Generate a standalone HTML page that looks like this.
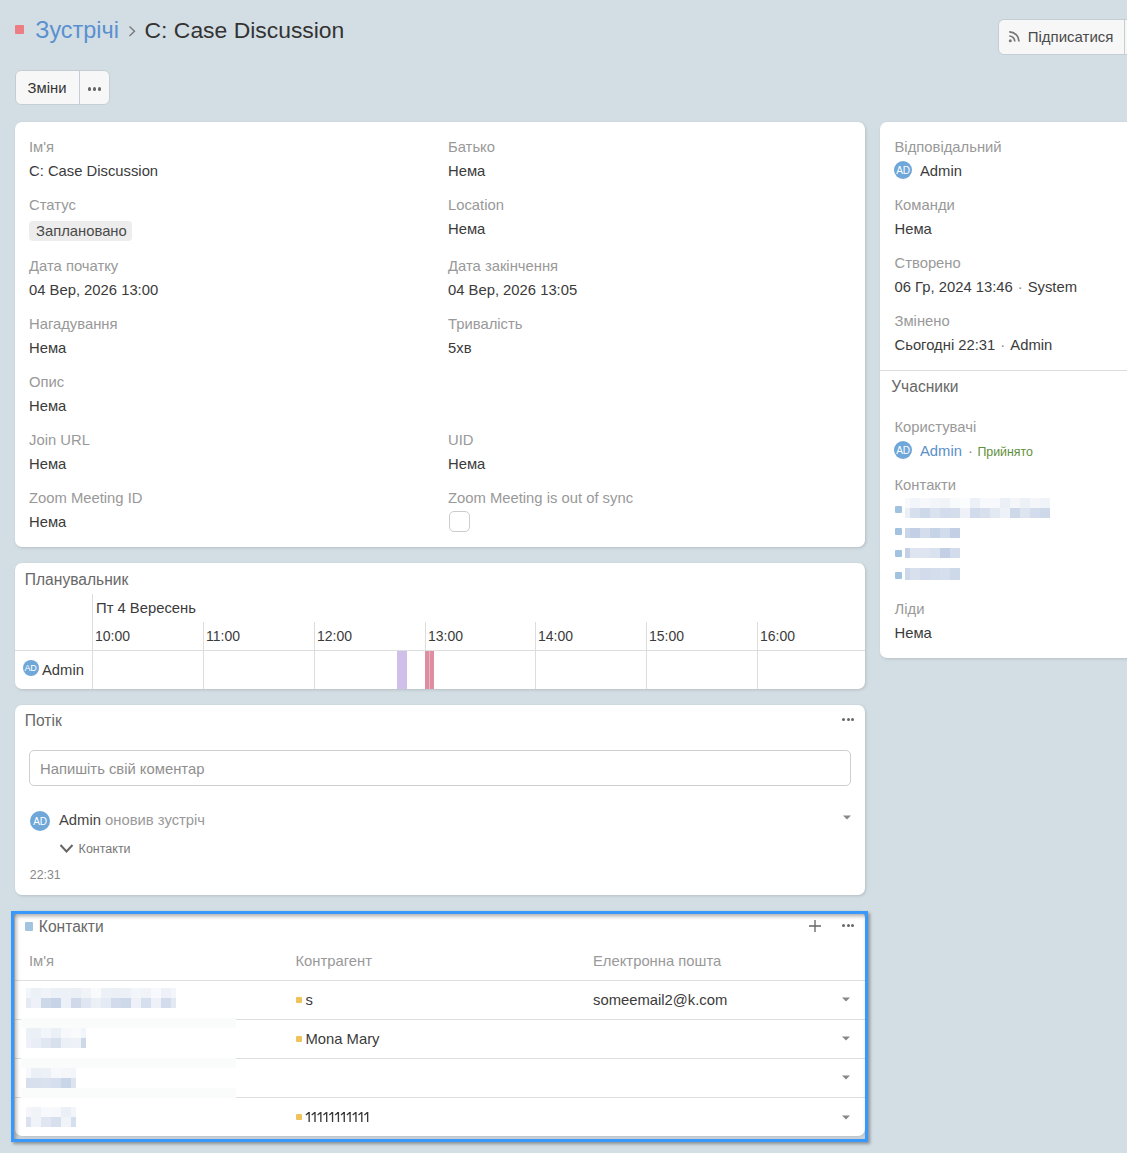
<!DOCTYPE html>
<html><head><meta charset="utf-8"><style>
html,body{margin:0;padding:0;}
body{width:1127px;height:1153px;background:#d3dee4;position:relative;overflow:hidden;font-family:"Liberation Sans",sans-serif;}
.t{position:absolute;white-space:nowrap;line-height:1;}
</style></head><body>
<div style="position:absolute;left:15px;top:25px;width:9px;height:9px;background:#ec7e83;border-radius:1px"></div>
<div class="t" style="left:35.3px;top:18.69px;font-size:23.4px;color:#5a90d0;font-weight:400;">Зустрічі</div>
<svg style="position:absolute;left:127px;top:24px" width="10" height="14" viewBox="0 0 10 14"><path d="M2.5 2.5 L7.5 7.2 L2.5 12" fill="none" stroke="#7a7a7a" stroke-width="1.4"/></svg>
<div class="t" style="left:144.6px;top:19.12px;font-size:22.9px;color:#333;font-weight:400;">C: Case Discussion</div>
<div style="position:absolute;left:998px;top:19px;width:140px;height:36px;background:#f7f7f7;border:1px solid #c5ced4;border-radius:6px;box-sizing:border-box"></div>
<div style="position:absolute;left:1124px;top:19px;width:1px;height:36px;background:#c5ced4"></div>
<svg style="position:absolute;left:1008px;top:30px" width="13" height="13" viewBox="0 0 13 13"><circle cx="2.3" cy="10.7" r="1.5" fill="#777"/><path d="M1.2 6 A5.5 5.5 0 0 1 6.8 11.6" fill="none" stroke="#777" stroke-width="1.7"/><path d="M1.2 1.8 A9.7 9.7 0 0 1 11 11.6" fill="none" stroke="#777" stroke-width="1.7"/></svg>
<div class="t" style="left:1027.7px;top:28.80px;font-size:15px;color:#4a4a4a;font-weight:400;">Підписатися</div>
<div style="position:absolute;left:15px;top:70px;width:95px;height:35px;background:#f7f7f7;border:1px solid #c5ced4;border-radius:6px;box-sizing:border-box"></div>
<div style="position:absolute;left:79px;top:70px;width:1px;height:35px;background:#c5ced4"></div>
<div class="t" style="left:27.6px;top:81.47px;font-size:14.8px;color:#333;font-weight:400;">Зміни</div>
<div style="position:absolute;left:87.75px;top:87px;width:3.5px;height:3.5px;background:#666;border-radius:50%"></div>
<div style="position:absolute;left:92.75px;top:87px;width:3.5px;height:3.5px;background:#666;border-radius:50%"></div>
<div style="position:absolute;left:97.75px;top:87px;width:3.5px;height:3.5px;background:#666;border-radius:50%"></div>
<div style="position:absolute;left:15px;top:122px;width:850px;height:425px;background:#fff;border-radius:7px;box-shadow:1px 1px 3px rgba(0,0,0,0.15)"></div>
<div style="position:absolute;left:880px;top:122px;width:260px;height:536px;background:#fff;border-radius:7px;box-shadow:1px 1px 3px rgba(0,0,0,0.15)"></div>
<div style="position:absolute;left:15px;top:563px;width:850px;height:126px;background:#fff;border-radius:7px;box-shadow:1px 1px 3px rgba(0,0,0,0.15)"></div>
<div style="position:absolute;left:15px;top:705px;width:850px;height:190px;background:#fff;border-radius:7px;box-shadow:1px 1px 3px rgba(0,0,0,0.15)"></div>
<div class="t" style="left:29px;top:140.47px;font-size:14.8px;color:#999;font-weight:400;">Ім'я</div>
<div class="t" style="left:29px;top:164.47px;font-size:14.8px;color:#3b3b3b;font-weight:400;">C: Case Discussion</div>
<div class="t" style="left:448px;top:140.47px;font-size:14.8px;color:#999;font-weight:400;">Батько</div>
<div class="t" style="left:448px;top:164.47px;font-size:14.8px;color:#3b3b3b;font-weight:400;">Нема</div>
<div class="t" style="left:29px;top:198.47px;font-size:14.8px;color:#999;font-weight:400;">Статус</div>
<div class="t" style="left:448px;top:198.47px;font-size:14.8px;color:#999;font-weight:400;">Location</div>
<div class="t" style="left:448px;top:222.47px;font-size:14.8px;color:#3b3b3b;font-weight:400;">Нема</div>
<div class="t" style="left:29px;top:259.47px;font-size:14.8px;color:#999;font-weight:400;">Дата початку</div>
<div class="t" style="left:29px;top:283.47px;font-size:14.8px;color:#3b3b3b;font-weight:400;">04 Вер, 2026 13:00</div>
<div class="t" style="left:448px;top:259.47px;font-size:14.8px;color:#999;font-weight:400;">Дата закінчення</div>
<div class="t" style="left:448px;top:283.47px;font-size:14.8px;color:#3b3b3b;font-weight:400;">04 Вер, 2026 13:05</div>
<div class="t" style="left:29px;top:317.47px;font-size:14.8px;color:#999;font-weight:400;">Нагадування</div>
<div class="t" style="left:29px;top:341.47px;font-size:14.8px;color:#3b3b3b;font-weight:400;">Нема</div>
<div class="t" style="left:448px;top:317.47px;font-size:14.8px;color:#999;font-weight:400;">Тривалість</div>
<div class="t" style="left:448px;top:341.47px;font-size:14.8px;color:#3b3b3b;font-weight:400;">5хв</div>
<div class="t" style="left:29px;top:375.47px;font-size:14.8px;color:#999;font-weight:400;">Опис</div>
<div class="t" style="left:29px;top:399.47px;font-size:14.8px;color:#3b3b3b;font-weight:400;">Нема</div>
<div class="t" style="left:29px;top:433.47px;font-size:14.8px;color:#999;font-weight:400;">Join URL</div>
<div class="t" style="left:29px;top:457.47px;font-size:14.8px;color:#3b3b3b;font-weight:400;">Нема</div>
<div class="t" style="left:448px;top:433.47px;font-size:14.8px;color:#999;font-weight:400;">UID</div>
<div class="t" style="left:448px;top:457.47px;font-size:14.8px;color:#3b3b3b;font-weight:400;">Нема</div>
<div class="t" style="left:29px;top:491.47px;font-size:14.8px;color:#999;font-weight:400;">Zoom Meeting ID</div>
<div class="t" style="left:29px;top:515.47px;font-size:14.8px;color:#3b3b3b;font-weight:400;">Нема</div>
<div class="t" style="left:448px;top:491.47px;font-size:14.8px;color:#999;font-weight:400;">Zoom Meeting is out of sync</div>
<div style="position:absolute;left:29px;top:221px;width:103px;height:20px;background:#ededed;border-radius:4px"></div>
<div class="t" style="left:36px;top:224.27px;font-size:14.8px;color:#4a4a4a;font-weight:400;">Заплановано</div>
<div style="position:absolute;left:449px;top:511px;width:21px;height:21px;border:1px solid #ccc;border-radius:5px;box-sizing:border-box;background:#fff"></div>
<div class="t" style="left:894.5px;top:140.47px;font-size:14.8px;color:#999;font-weight:400;">Відповідальний</div>
<div style="position:absolute;left:894px;top:161px;width:18px;height:18px;background:#6fa7d9;border-radius:50%"></div>
<div class="t" style="left:894px;top:161.5px;width:18px;height:18px;line-height:18px;text-align:center;font-size:10px;color:#fff;letter-spacing:-0.3px">AD</div>
<div class="t" style="left:920px;top:164.47px;font-size:14.8px;color:#3b3b3b;font-weight:400;">Admin</div>
<div class="t" style="left:894.5px;top:198.47px;font-size:14.8px;color:#999;font-weight:400;">Команди</div>
<div class="t" style="left:894.5px;top:222.47px;font-size:14.8px;color:#3b3b3b;font-weight:400;">Нема</div>
<div class="t" style="left:894.5px;top:256.47px;font-size:14.8px;color:#999;font-weight:400;">Створено</div>
<div class="t" style="left:894.5px;top:280.47px;font-size:14.8px;color:#3b3b3b;font-weight:400;">06 Гр, 2024 13:46<span style="color:#888;padding:0 5px">·</span>System</div>
<div class="t" style="left:894.5px;top:314.47px;font-size:14.8px;color:#999;font-weight:400;">Змінено</div>
<div class="t" style="left:894.5px;top:338.47px;font-size:14.8px;color:#3b3b3b;font-weight:400;">Сьогодні 22:31<span style="color:#888;padding:0 5px">·</span>Admin</div>
<div style="position:absolute;left:880px;top:370px;width:260px;height:1px;background:#dcdcdc"></div>
<div class="t" style="left:891.2px;top:378.59px;font-size:15.6px;color:#686868;font-weight:400;">Учасники</div>
<div class="t" style="left:894.5px;top:419.97px;font-size:14.8px;color:#999;font-weight:400;">Користувачі</div>
<div style="position:absolute;left:894px;top:441px;width:18px;height:18px;background:#6fa7d9;border-radius:50%"></div>
<div class="t" style="left:894px;top:441.5px;width:18px;height:18px;line-height:18px;text-align:center;font-size:10px;color:#fff;letter-spacing:-0.3px">AD</div>
<div class="t" style="left:920px;top:443.97px;font-size:14.8px;color:#5a8fc8;font-weight:400;">Admin</div>
<div class="t" style="left:968px;top:443.97px;font-size:14.8px;color:#888;font-weight:400;">·</div>
<div class="t" style="left:977.4px;top:446.00px;font-size:12.4px;color:#5f8f3e;font-weight:400;">Прийнято</div>
<div class="t" style="left:894.5px;top:478.27px;font-size:14.8px;color:#999;font-weight:400;">Контакти</div>
<div style="position:absolute;left:895.3px;top:506px;width:6.5px;height:6.5px;background:#a2c3e0;border-radius:1px"></div>
<div style="position:absolute;left:905px;top:498.0px;width:5px;height:10.0px;background:rgba(70,110,175,0.04)"></div>
<div style="position:absolute;left:910px;top:498.0px;width:10px;height:10.0px;background:rgba(70,110,175,0.07)"></div>
<div style="position:absolute;left:920px;top:498.0px;width:10px;height:10.0px;background:rgba(70,110,175,0.05)"></div>
<div style="position:absolute;left:930px;top:498.0px;width:10px;height:10.0px;background:rgba(70,110,175,0.07)"></div>
<div style="position:absolute;left:940px;top:498.0px;width:10px;height:10.0px;background:rgba(70,110,175,0.08)"></div>
<div style="position:absolute;left:950px;top:498.0px;width:10px;height:10.0px;background:rgba(70,110,175,0.03)"></div>
<div style="position:absolute;left:960px;top:498.0px;width:10px;height:10.0px;background:rgba(70,110,175,0.02)"></div>
<div style="position:absolute;left:970px;top:498.0px;width:10px;height:10.0px;background:rgba(70,110,175,0.10)"></div>
<div style="position:absolute;left:980px;top:498.0px;width:10px;height:10.0px;background:rgba(70,110,175,0.04)"></div>
<div style="position:absolute;left:990px;top:498.0px;width:10px;height:10.0px;background:rgba(70,110,175,0.04)"></div>
<div style="position:absolute;left:1000px;top:498.0px;width:10px;height:10.0px;background:rgba(70,110,175,0.11)"></div>
<div style="position:absolute;left:1010px;top:498.0px;width:10px;height:10.0px;background:rgba(70,110,175,0.06)"></div>
<div style="position:absolute;left:1020px;top:498.0px;width:10px;height:10.0px;background:rgba(70,110,175,0.10)"></div>
<div style="position:absolute;left:1030px;top:498.0px;width:10px;height:10.0px;background:rgba(70,110,175,0.06)"></div>
<div style="position:absolute;left:1040px;top:498.0px;width:10px;height:10.0px;background:rgba(70,110,175,0.08)"></div>
<div style="position:absolute;left:905px;top:508.0px;width:5px;height:10.0px;background:rgba(70,110,175,0.11)"></div>
<div style="position:absolute;left:910px;top:508.0px;width:10px;height:10.0px;background:rgba(70,110,175,0.22)"></div>
<div style="position:absolute;left:920px;top:508.0px;width:10px;height:10.0px;background:rgba(70,110,175,0.27)"></div>
<div style="position:absolute;left:930px;top:508.0px;width:10px;height:10.0px;background:rgba(70,110,175,0.20)"></div>
<div style="position:absolute;left:940px;top:508.0px;width:10px;height:10.0px;background:rgba(70,110,175,0.24)"></div>
<div style="position:absolute;left:950px;top:508.0px;width:10px;height:10.0px;background:rgba(70,110,175,0.23)"></div>
<div style="position:absolute;left:960px;top:508.0px;width:10px;height:10.0px;background:rgba(70,110,175,0.09)"></div>
<div style="position:absolute;left:970px;top:508.0px;width:10px;height:10.0px;background:rgba(70,110,175,0.25)"></div>
<div style="position:absolute;left:980px;top:508.0px;width:10px;height:10.0px;background:rgba(70,110,175,0.21)"></div>
<div style="position:absolute;left:990px;top:508.0px;width:10px;height:10.0px;background:rgba(70,110,175,0.15)"></div>
<div style="position:absolute;left:1000px;top:508.0px;width:10px;height:10.0px;background:rgba(70,110,175,0.09)"></div>
<div style="position:absolute;left:1010px;top:508.0px;width:10px;height:10.0px;background:rgba(70,110,175,0.27)"></div>
<div style="position:absolute;left:1020px;top:508.0px;width:10px;height:10.0px;background:rgba(70,110,175,0.18)"></div>
<div style="position:absolute;left:1030px;top:508.0px;width:10px;height:10.0px;background:rgba(70,110,175,0.24)"></div>
<div style="position:absolute;left:1040px;top:508.0px;width:10px;height:10.0px;background:rgba(70,110,175,0.27)"></div>
<div style="position:absolute;left:895.3px;top:528px;width:6.5px;height:6.5px;background:#a2c3e0;border-radius:1px"></div>
<div style="position:absolute;left:905px;top:528.0px;width:5px;height:10.0px;background:rgba(70,110,175,0.29)"></div>
<div style="position:absolute;left:910px;top:528.0px;width:10px;height:10.0px;background:rgba(70,110,175,0.33)"></div>
<div style="position:absolute;left:920px;top:528.0px;width:10px;height:10.0px;background:rgba(70,110,175,0.23)"></div>
<div style="position:absolute;left:930px;top:528.0px;width:10px;height:10.0px;background:rgba(70,110,175,0.30)"></div>
<div style="position:absolute;left:940px;top:528.0px;width:10px;height:10.0px;background:rgba(70,110,175,0.24)"></div>
<div style="position:absolute;left:950px;top:528.0px;width:10px;height:10.0px;background:rgba(70,110,175,0.33)"></div>
<div style="position:absolute;left:895.3px;top:550px;width:6.5px;height:6.5px;background:#a2c3e0;border-radius:1px"></div>
<div style="position:absolute;left:905px;top:548.0px;width:5px;height:10.0px;background:rgba(70,110,175,0.32)"></div>
<div style="position:absolute;left:910px;top:548.0px;width:10px;height:10.0px;background:rgba(70,110,175,0.18)"></div>
<div style="position:absolute;left:920px;top:548.0px;width:10px;height:10.0px;background:rgba(70,110,175,0.18)"></div>
<div style="position:absolute;left:930px;top:548.0px;width:10px;height:10.0px;background:rgba(70,110,175,0.20)"></div>
<div style="position:absolute;left:940px;top:548.0px;width:10px;height:10.0px;background:rgba(70,110,175,0.33)"></div>
<div style="position:absolute;left:950px;top:548.0px;width:10px;height:10.0px;background:rgba(70,110,175,0.24)"></div>
<div style="position:absolute;left:895.3px;top:572px;width:6.5px;height:6.5px;background:#a2c3e0;border-radius:1px"></div>
<div style="position:absolute;left:905px;top:568.0px;width:5px;height:12.0px;background:rgba(70,110,175,0.27)"></div>
<div style="position:absolute;left:910px;top:568.0px;width:10px;height:12.0px;background:rgba(70,110,175,0.21)"></div>
<div style="position:absolute;left:920px;top:568.0px;width:10px;height:12.0px;background:rgba(70,110,175,0.25)"></div>
<div style="position:absolute;left:930px;top:568.0px;width:10px;height:12.0px;background:rgba(70,110,175,0.23)"></div>
<div style="position:absolute;left:940px;top:568.0px;width:10px;height:12.0px;background:rgba(70,110,175,0.22)"></div>
<div style="position:absolute;left:950px;top:568.0px;width:10px;height:12.0px;background:rgba(70,110,175,0.27)"></div>
<div class="t" style="left:894.5px;top:602.47px;font-size:14.8px;color:#999;font-weight:400;">Ліди</div>
<div class="t" style="left:894.5px;top:626.47px;font-size:14.8px;color:#3b3b3b;font-weight:400;">Нема</div>
<div class="t" style="left:24.8px;top:571.79px;font-size:15.6px;color:#686868;font-weight:400;">Планувальник</div>
<div style="position:absolute;left:92px;top:594px;width:1px;height:95px;background:#ddd"></div>
<div class="t" style="left:96px;top:601.47px;font-size:14.8px;color:#3b3b3b;font-weight:400;">Пт 4 Вересень</div>
<div style="position:absolute;left:15px;top:650px;width:850px;height:1px;background:#ddd"></div>
<div class="t" style="left:95px;top:629.15px;font-size:14px;color:#3b3b3b;font-weight:400;">10:00</div>
<div style="position:absolute;left:203px;top:622px;width:1px;height:67px;background:#ddd"></div>
<div class="t" style="left:206px;top:629.15px;font-size:14px;color:#3b3b3b;font-weight:400;">11:00</div>
<div style="position:absolute;left:314px;top:622px;width:1px;height:67px;background:#ddd"></div>
<div class="t" style="left:317px;top:629.15px;font-size:14px;color:#3b3b3b;font-weight:400;">12:00</div>
<div style="position:absolute;left:425px;top:622px;width:1px;height:67px;background:#ddd"></div>
<div class="t" style="left:428px;top:629.15px;font-size:14px;color:#3b3b3b;font-weight:400;">13:00</div>
<div style="position:absolute;left:535px;top:622px;width:1px;height:67px;background:#ddd"></div>
<div class="t" style="left:538px;top:629.15px;font-size:14px;color:#3b3b3b;font-weight:400;">14:00</div>
<div style="position:absolute;left:646px;top:622px;width:1px;height:67px;background:#ddd"></div>
<div class="t" style="left:649px;top:629.15px;font-size:14px;color:#3b3b3b;font-weight:400;">15:00</div>
<div style="position:absolute;left:757px;top:622px;width:1px;height:67px;background:#ddd"></div>
<div class="t" style="left:760px;top:629.15px;font-size:14px;color:#3b3b3b;font-weight:400;">16:00</div>
<div style="position:absolute;left:22.5px;top:659.5px;width:16px;height:16px;background:#6fa7d9;border-radius:50%"></div>
<div class="t" style="left:22.5px;top:660.0px;width:16px;height:16px;line-height:16px;text-align:center;font-size:9px;color:#fff;letter-spacing:-0.3px">AD</div>
<div class="t" style="left:42px;top:663.47px;font-size:14.8px;color:#3b3b3b;font-weight:400;">Admin</div>
<div style="position:absolute;left:397px;top:651px;width:10px;height:38px;background:#d0bfe8"></div>
<div style="position:absolute;left:425px;top:651px;width:9px;height:38px;background:#df8ea1"></div>
<div style="position:absolute;left:429px;top:651px;width:1px;height:38px;background:#e8b3c3"></div>
<div class="t" style="left:24.8px;top:712.79px;font-size:15.6px;color:#686868;font-weight:400;">Потік</div>
<div style="position:absolute;left:842.0px;top:718px;width:3.1px;height:3.1px;background:#666;border-radius:50%"></div>
<div style="position:absolute;left:846.7px;top:718px;width:3.1px;height:3.1px;background:#666;border-radius:50%"></div>
<div style="position:absolute;left:851.4px;top:718px;width:3.1px;height:3.1px;background:#666;border-radius:50%"></div>
<div style="position:absolute;left:29px;top:750px;width:822px;height:36px;border:1px solid #cfcfcf;border-radius:5px;box-sizing:border-box"></div>
<div class="t" style="left:40px;top:761.67px;font-size:14.8px;color:#8f8f8f;font-weight:400;">Напишіть свій коментар</div>
<div style="position:absolute;left:30px;top:811px;width:20px;height:20px;background:#6fa7d9;border-radius:50%"></div>
<div class="t" style="left:30px;top:811.5px;width:20px;height:20px;line-height:20px;text-align:center;font-size:10px;color:#fff;letter-spacing:-0.3px">AD</div>
<div class="t" style="left:59px;top:813.47px;font-size:14.8px;color:#444;font-weight:400;">Admin <span style="color:#999">оновив зустріч</span></div>
<svg style="position:absolute;left:842px;top:815px" width="10" height="6" viewBox="0 0 10 6"><path d="M1 0.5 L9 0.5 L5 4.5 Z" fill="#888"/></svg>
<svg style="position:absolute;left:59px;top:843px" width="15" height="11" viewBox="0 0 15 11"><path d="M1.5 2 L7.5 8.5 L13.5 2" fill="none" stroke="#666" stroke-width="2"/></svg>
<div class="t" style="left:78.6px;top:843.42px;font-size:12.5px;color:#777;font-weight:400;">Контакти</div>
<div class="t" style="left:29.8px;top:868.59px;font-size:12.3px;color:#888;font-weight:400;">22:31</div>
<div style="position:absolute;left:15px;top:911px;width:850px;height:225px;background:#fff;border-radius:7px;box-shadow:1px 1px 3px rgba(0,0,0,0.15)"></div>
<div style="position:absolute;left:25px;top:922px;width:8px;height:8.7px;background:#a3c4e0;border-radius:1px"></div>
<div class="t" style="left:38.8px;top:919.09px;font-size:15.6px;color:#686868;font-weight:400;">Контакти</div>
<svg style="position:absolute;left:809px;top:920px" width="12" height="12" viewBox="0 0 12 12"><path d="M6 0 V12 M0 6 H12" stroke="#666" stroke-width="1.35"/></svg>
<div style="position:absolute;left:842.0px;top:924px;width:3.1px;height:3.1px;background:#666;border-radius:50%"></div>
<div style="position:absolute;left:846.7px;top:924px;width:3.1px;height:3.1px;background:#666;border-radius:50%"></div>
<div style="position:absolute;left:851.4px;top:924px;width:3.1px;height:3.1px;background:#666;border-radius:50%"></div>
<div class="t" style="left:29px;top:954.07px;font-size:14.8px;color:#999;font-weight:400;">Ім'я</div>
<div class="t" style="left:295.5px;top:954.07px;font-size:14.8px;color:#999;font-weight:400;">Контрагент</div>
<div class="t" style="left:593px;top:954.07px;font-size:14.8px;color:#999;font-weight:400;">Електронна пошта</div>
<div style="position:absolute;left:14px;top:980px;width:851px;height:1px;background:#dedede"></div>
<div style="position:absolute;left:14px;top:1019px;width:851px;height:1px;background:#dedede"></div>
<div style="position:absolute;left:14px;top:1058px;width:851px;height:1px;background:#dedede"></div>
<div style="position:absolute;left:14px;top:1097px;width:851px;height:1px;background:#dedede"></div>
<div style="position:absolute;left:295.5px;top:996.6px;width:6px;height:6px;background:#f0c25a;border-radius:1px"></div>
<div class="t" style="left:305.5px;top:993.07px;font-size:14.8px;color:#3b3b3b;font-weight:400;">s</div>
<div class="t" style="left:593px;top:993.07px;font-size:14.8px;color:#3b3b3b;font-weight:400;">someemail2@k.com</div>
<svg style="position:absolute;left:841px;top:997px" width="10" height="6" viewBox="0 0 10 6"><path d="M1 0.5 L9 0.5 L5 4.5 Z" fill="#888"/></svg>
<div style="position:absolute;left:26px;top:988.0px;width:5px;height:10.0px;background:rgba(70,110,175,0.07)"></div>
<div style="position:absolute;left:31px;top:988.0px;width:10px;height:10.0px;background:rgba(70,110,175,0.10)"></div>
<div style="position:absolute;left:41px;top:988.0px;width:10px;height:10.0px;background:rgba(70,110,175,0.08)"></div>
<div style="position:absolute;left:51px;top:988.0px;width:10px;height:10.0px;background:rgba(70,110,175,0.10)"></div>
<div style="position:absolute;left:61px;top:988.0px;width:10px;height:10.0px;background:rgba(70,110,175,0.10)"></div>
<div style="position:absolute;left:71px;top:988.0px;width:10px;height:10.0px;background:rgba(70,110,175,0.11)"></div>
<div style="position:absolute;left:81px;top:988.0px;width:10px;height:10.0px;background:rgba(70,110,175,0.08)"></div>
<div style="position:absolute;left:91px;top:988.0px;width:10px;height:10.0px;background:rgba(70,110,175,0.03)"></div>
<div style="position:absolute;left:101px;top:988.0px;width:10px;height:10.0px;background:rgba(70,110,175,0.10)"></div>
<div style="position:absolute;left:111px;top:988.0px;width:10px;height:10.0px;background:rgba(70,110,175,0.11)"></div>
<div style="position:absolute;left:121px;top:988.0px;width:10px;height:10.0px;background:rgba(70,110,175,0.10)"></div>
<div style="position:absolute;left:131px;top:988.0px;width:10px;height:10.0px;background:rgba(70,110,175,0.07)"></div>
<div style="position:absolute;left:141px;top:988.0px;width:10px;height:10.0px;background:rgba(70,110,175,0.08)"></div>
<div style="position:absolute;left:151px;top:988.0px;width:10px;height:10.0px;background:rgba(70,110,175,0.04)"></div>
<div style="position:absolute;left:161px;top:988.0px;width:10px;height:10.0px;background:rgba(70,110,175,0.09)"></div>
<div style="position:absolute;left:171px;top:988.0px;width:5px;height:10.0px;background:rgba(70,110,175,0.07)"></div>
<div style="position:absolute;left:26px;top:998.0px;width:5px;height:10.0px;background:rgba(70,110,175,0.14)"></div>
<div style="position:absolute;left:31px;top:998.0px;width:10px;height:10.0px;background:rgba(70,110,175,0.09)"></div>
<div style="position:absolute;left:41px;top:998.0px;width:10px;height:10.0px;background:rgba(70,110,175,0.27)"></div>
<div style="position:absolute;left:51px;top:998.0px;width:10px;height:10.0px;background:rgba(70,110,175,0.30)"></div>
<div style="position:absolute;left:61px;top:998.0px;width:10px;height:10.0px;background:rgba(70,110,175,0.10)"></div>
<div style="position:absolute;left:71px;top:998.0px;width:10px;height:10.0px;background:rgba(70,110,175,0.26)"></div>
<div style="position:absolute;left:81px;top:998.0px;width:10px;height:10.0px;background:rgba(70,110,175,0.17)"></div>
<div style="position:absolute;left:91px;top:998.0px;width:10px;height:10.0px;background:rgba(70,110,175,0.11)"></div>
<div style="position:absolute;left:101px;top:998.0px;width:10px;height:10.0px;background:rgba(70,110,175,0.14)"></div>
<div style="position:absolute;left:111px;top:998.0px;width:10px;height:10.0px;background:rgba(70,110,175,0.25)"></div>
<div style="position:absolute;left:121px;top:998.0px;width:10px;height:10.0px;background:rgba(70,110,175,0.27)"></div>
<div style="position:absolute;left:131px;top:998.0px;width:10px;height:10.0px;background:rgba(70,110,175,0.09)"></div>
<div style="position:absolute;left:141px;top:998.0px;width:10px;height:10.0px;background:rgba(70,110,175,0.22)"></div>
<div style="position:absolute;left:151px;top:998.0px;width:10px;height:10.0px;background:rgba(70,110,175,0.09)"></div>
<div style="position:absolute;left:161px;top:998.0px;width:10px;height:10.0px;background:rgba(70,110,175,0.24)"></div>
<div style="position:absolute;left:171px;top:998.0px;width:5px;height:10.0px;background:rgba(70,110,175,0.15)"></div>
<div style="position:absolute;left:295.5px;top:1035.8px;width:6px;height:6px;background:#f0c25a;border-radius:1px"></div>
<div class="t" style="left:305.5px;top:1032.27px;font-size:14.8px;color:#3b3b3b;font-weight:400;">Mona Mary</div>
<svg style="position:absolute;left:841px;top:1036px" width="10" height="6" viewBox="0 0 10 6"><path d="M1 0.5 L9 0.5 L5 4.5 Z" fill="#888"/></svg>
<div style="position:absolute;left:26px;top:1028.0px;width:5px;height:10.0px;background:rgba(70,110,175,0.10)"></div>
<div style="position:absolute;left:31px;top:1028.0px;width:10px;height:10.0px;background:rgba(70,110,175,0.11)"></div>
<div style="position:absolute;left:41px;top:1028.0px;width:10px;height:10.0px;background:rgba(70,110,175,0.07)"></div>
<div style="position:absolute;left:51px;top:1028.0px;width:10px;height:10.0px;background:rgba(70,110,175,0.11)"></div>
<div style="position:absolute;left:61px;top:1028.0px;width:10px;height:10.0px;background:rgba(70,110,175,0.05)"></div>
<div style="position:absolute;left:71px;top:1028.0px;width:10px;height:10.0px;background:rgba(70,110,175,0.03)"></div>
<div style="position:absolute;left:81px;top:1028.0px;width:5px;height:10.0px;background:rgba(70,110,175,0.07)"></div>
<div style="position:absolute;left:26px;top:1038.0px;width:5px;height:10.0px;background:rgba(70,110,175,0.09)"></div>
<div style="position:absolute;left:31px;top:1038.0px;width:10px;height:10.0px;background:rgba(70,110,175,0.12)"></div>
<div style="position:absolute;left:41px;top:1038.0px;width:10px;height:10.0px;background:rgba(70,110,175,0.17)"></div>
<div style="position:absolute;left:51px;top:1038.0px;width:10px;height:10.0px;background:rgba(70,110,175,0.21)"></div>
<div style="position:absolute;left:61px;top:1038.0px;width:10px;height:10.0px;background:rgba(70,110,175,0.11)"></div>
<div style="position:absolute;left:71px;top:1038.0px;width:10px;height:10.0px;background:rgba(70,110,175,0.09)"></div>
<div style="position:absolute;left:81px;top:1038.0px;width:5px;height:10.0px;background:rgba(70,110,175,0.27)"></div>
<svg style="position:absolute;left:841px;top:1075px" width="10" height="6" viewBox="0 0 10 6"><path d="M1 0.5 L9 0.5 L5 4.5 Z" fill="#888"/></svg>
<div style="position:absolute;left:26px;top:1068.0px;width:5px;height:10.0px;background:rgba(70,110,175,0.05)"></div>
<div style="position:absolute;left:31px;top:1068.0px;width:10px;height:10.0px;background:rgba(70,110,175,0.11)"></div>
<div style="position:absolute;left:41px;top:1068.0px;width:10px;height:10.0px;background:rgba(70,110,175,0.10)"></div>
<div style="position:absolute;left:51px;top:1068.0px;width:10px;height:10.0px;background:rgba(70,110,175,0.05)"></div>
<div style="position:absolute;left:61px;top:1068.0px;width:10px;height:10.0px;background:rgba(70,110,175,0.06)"></div>
<div style="position:absolute;left:71px;top:1068.0px;width:5px;height:10.0px;background:rgba(70,110,175,0.07)"></div>
<div style="position:absolute;left:26px;top:1078.0px;width:5px;height:10.0px;background:rgba(70,110,175,0.22)"></div>
<div style="position:absolute;left:31px;top:1078.0px;width:10px;height:10.0px;background:rgba(70,110,175,0.21)"></div>
<div style="position:absolute;left:41px;top:1078.0px;width:10px;height:10.0px;background:rgba(70,110,175,0.20)"></div>
<div style="position:absolute;left:51px;top:1078.0px;width:10px;height:10.0px;background:rgba(70,110,175,0.22)"></div>
<div style="position:absolute;left:61px;top:1078.0px;width:10px;height:10.0px;background:rgba(70,110,175,0.29)"></div>
<div style="position:absolute;left:71px;top:1078.0px;width:5px;height:10.0px;background:rgba(70,110,175,0.19)"></div>
<div style="position:absolute;left:295.5px;top:1114px;width:6px;height:6px;background:#f0c25a;border-radius:1px"></div>
<svg style="position:absolute;left:0;top:0" width="1127" height="1153"><path d="M305.90 1115 L308.90 1112.5 M309.15 1112 V1122 M311.75 1115 L314.75 1112.5 M315.00 1112 V1122 M317.60 1115 L320.60 1112.5 M320.85 1112 V1122 M323.45 1115 L326.45 1112.5 M326.70 1112 V1122 M329.30 1115 L332.30 1112.5 M332.55 1112 V1122 M335.15 1115 L338.15 1112.5 M338.40 1112 V1122 M341.00 1115 L344.00 1112.5 M344.25 1112 V1122 M346.85 1115 L349.85 1112.5 M350.10 1112 V1122 M352.70 1115 L355.70 1112.5 M355.95 1112 V1122 M358.55 1115 L361.55 1112.5 M361.80 1112 V1122 M364.40 1115 L367.40 1112.5 M367.65 1112 V1122 " fill="none" stroke="#3a3a3a" stroke-width="1.35"/></svg>
<svg style="position:absolute;left:841px;top:1115px" width="10" height="6" viewBox="0 0 10 6"><path d="M1 0.5 L9 0.5 L5 4.5 Z" fill="#888"/></svg>
<div style="position:absolute;left:26px;top:1107.0px;width:5px;height:10.0px;background:rgba(70,110,175,0.06)"></div>
<div style="position:absolute;left:31px;top:1107.0px;width:10px;height:10.0px;background:rgba(70,110,175,0.08)"></div>
<div style="position:absolute;left:41px;top:1107.0px;width:10px;height:10.0px;background:rgba(70,110,175,0.04)"></div>
<div style="position:absolute;left:51px;top:1107.0px;width:10px;height:10.0px;background:rgba(70,110,175,0.05)"></div>
<div style="position:absolute;left:61px;top:1107.0px;width:10px;height:10.0px;background:rgba(70,110,175,0.11)"></div>
<div style="position:absolute;left:71px;top:1107.0px;width:5px;height:10.0px;background:rgba(70,110,175,0.07)"></div>
<div style="position:absolute;left:26px;top:1117.0px;width:5px;height:10.0px;background:rgba(70,110,175,0.20)"></div>
<div style="position:absolute;left:31px;top:1117.0px;width:10px;height:10.0px;background:rgba(70,110,175,0.08)"></div>
<div style="position:absolute;left:41px;top:1117.0px;width:10px;height:10.0px;background:rgba(70,110,175,0.17)"></div>
<div style="position:absolute;left:51px;top:1117.0px;width:10px;height:10.0px;background:rgba(70,110,175,0.21)"></div>
<div style="position:absolute;left:61px;top:1117.0px;width:10px;height:10.0px;background:rgba(70,110,175,0.08)"></div>
<div style="position:absolute;left:71px;top:1117.0px;width:5px;height:10.0px;background:rgba(70,110,175,0.22)"></div>
<div style="position:absolute;left:21px;top:1018px;width:215px;height:10px;background:#fafbfb"></div>
<div style="position:absolute;left:21px;top:1058px;width:215px;height:10px;background:#fafbfb"></div>
<div style="position:absolute;left:21px;top:1088px;width:215px;height:10px;background:#fafbfb"></div>
<div style="position:absolute;left:11px;top:911px;width:857px;height:231px;border:3px solid #3898fc;box-sizing:border-box;box-shadow:2px 2px 3px rgba(0,0,0,0.35), inset 2px 2px 4px rgba(0,0,0,0.35)"></div>

</body></html>
